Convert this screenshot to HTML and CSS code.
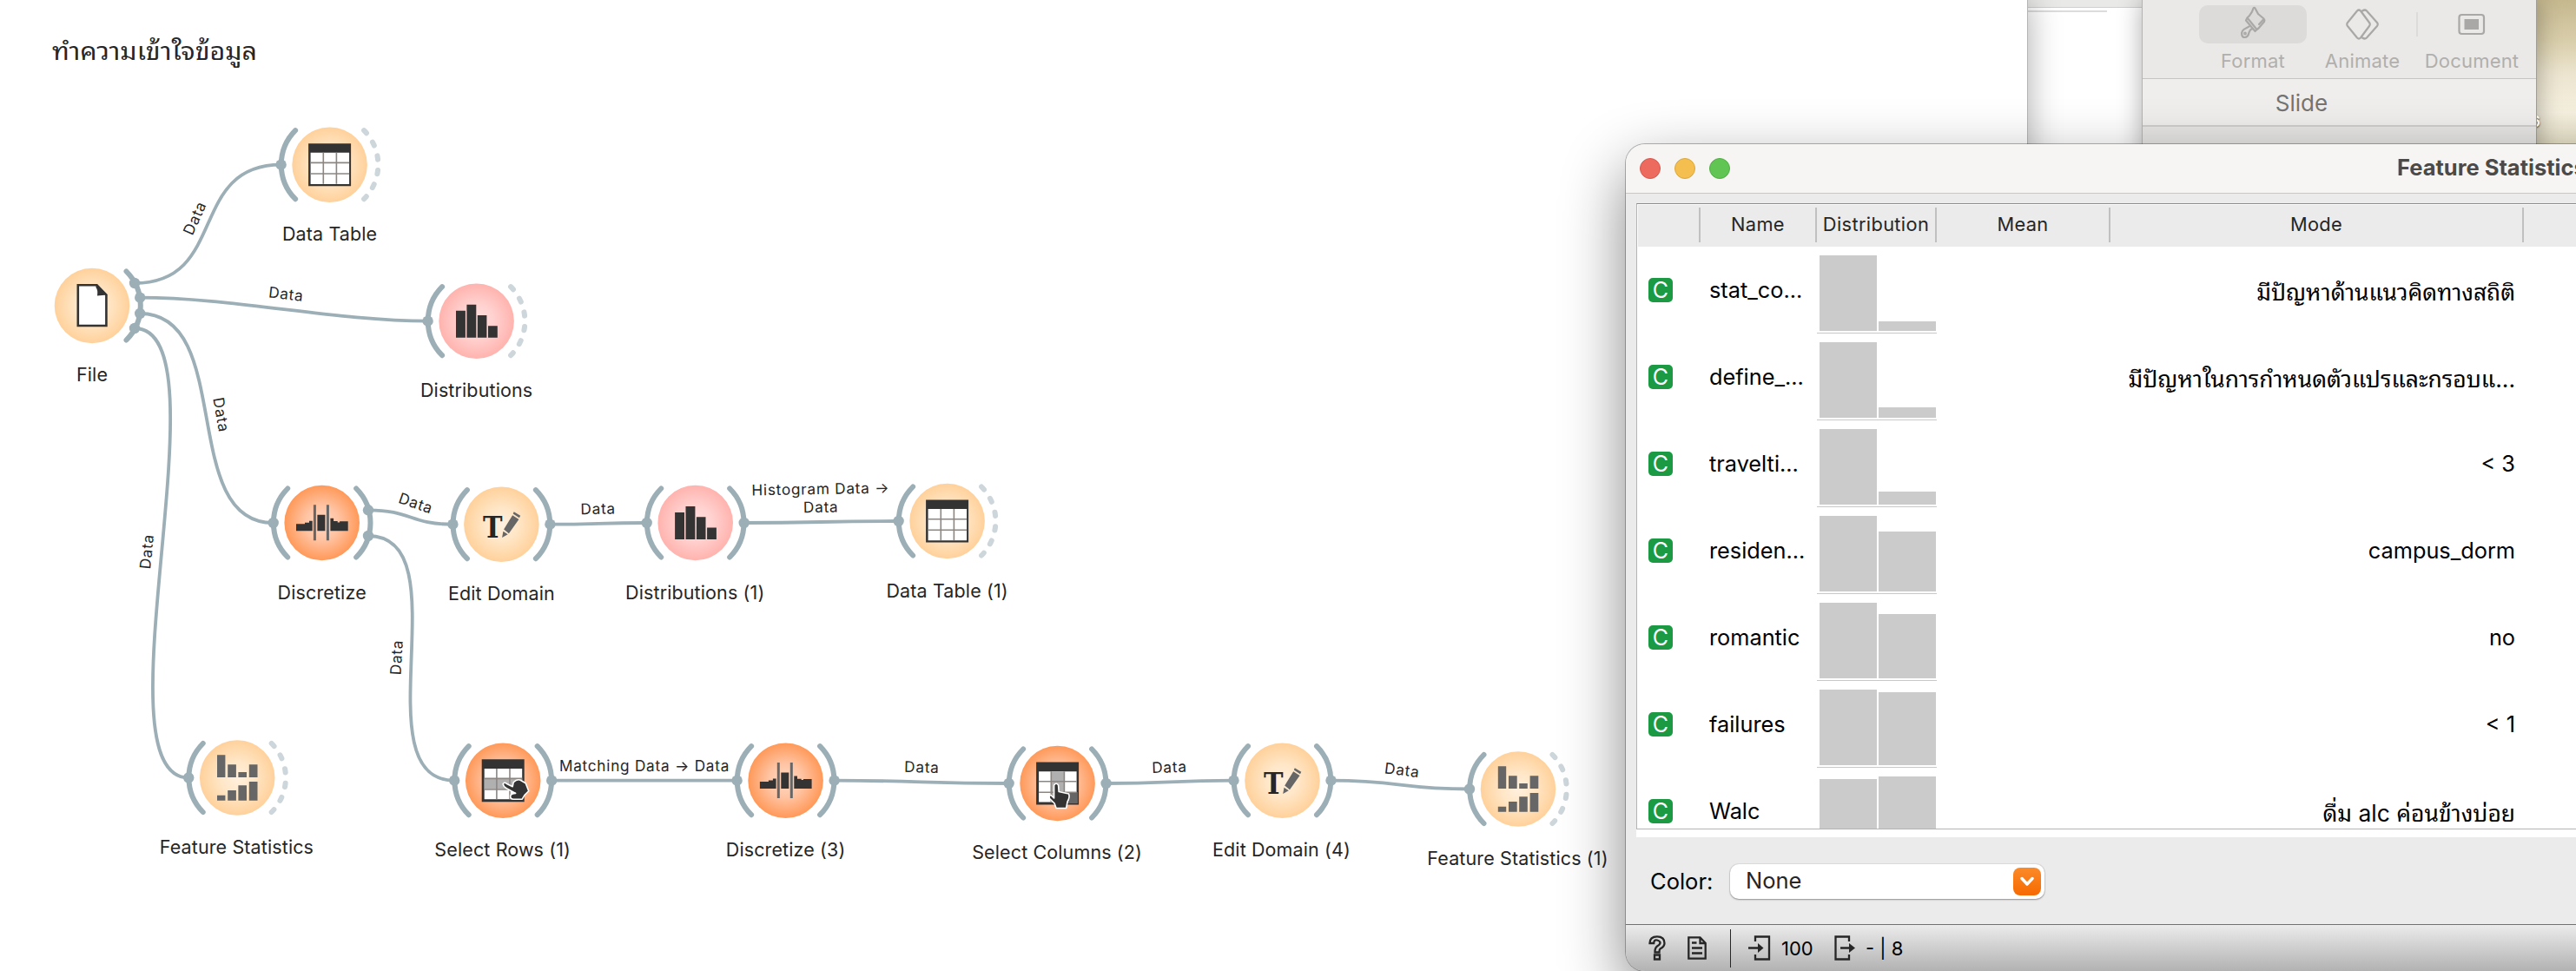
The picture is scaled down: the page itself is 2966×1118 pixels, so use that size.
FILE: index.html
```html
<!DOCTYPE html>
<html lang="th">
<head>
<meta charset="utf-8">
<title>Feature Statistics</title>
<link rel="stylesheet" href="styles.css">
</head>
<body>
<main class="desktop">

  <section class="window viewer">
    <div class="viewer-bar"></div>
    <div class="viewer-rule"></div>
  </section>

  <section class="window keynote">
    <div class="kn-toolbar">
      <div class="kn-tool kn-format">
        <div class="kn-button kn-active">
          <svg width="32" height="38" viewBox="0 0 32 38"><path d="M16.500 2.500Q17.500 1 18.500 2.500L22 9L28.500 14.500Q30 16 29 18L22.500 25.500L20.500 27L9.500 13.500L12 11Q15.500 7 16.500 2.500zM9.500 13.500L8 16.500L18.500 29L20.500 27M28.500 15L23 21M13 22.500C10.500 25 6 25.500 4 28.500C2 32 3.500 36 6.500 36C9.500 36 11 33 11.500 30.500C12 28 13 27 15.500 25.500"/><circle cx="7" cy="31.500" r=".8"/></svg>
        </div>
        <span>Format</span>
      </div>
      <div class="kn-tool kn-animate">
        <div class="kn-button">
          <svg width="42" height="38" viewBox="0 0 42 38"><path d="M15 3.500Q17 1.500 19 3.500L29 17Q30.500 19 29 21L19 34.500Q17 36.500 15 34.500L4 21Q2.500 19 4 17ZM21 3.500Q24 1.500 26 3.500L38 17Q39.500 19 38 21L26 34.500Q24 36.500 21 34.500"/></svg>
        </div>
        <span>Animate</span>
      </div>
      <div class="kn-separator"></div>
      <div class="kn-tool kn-document">
        <div class="kn-button">
          <svg width="32" height="26" viewBox="0 0 32 26"><rect x="1.500" y="2" width="28.500" height="22" rx="3"/><rect class="solid" x="7.500" y="7" width="16.500" height="12"/></svg>
        </div>
        <span>Document</span>
      </div>
    </div>
    <div class="kn-tab">Slide</div>
    <div class="kn-body"></div>
  </section>
  <span class="desktop-label">6</span>

  <section class="window canvas">
    <svg class="scheme" width="2334" height="1118" viewBox="0 0 2334 1118">
      <defs>
        <radialGradient id="yellow"><stop offset="0" stop-color="#fff0de"/><stop offset=".45" stop-color="#ffe6c6"/><stop offset="1" stop-color="#ffd19b"/></radialGradient>
        <radialGradient id="red"><stop offset="0" stop-color="#ffe0df"/><stop offset=".45" stop-color="#ffd2d0"/><stop offset="1" stop-color="#ffb3ae"/></radialGradient>
        <radialGradient id="orange"><stop offset="0" stop-color="#ffd9c4"/><stop offset=".45" stop-color="#ffc4a3"/><stop offset="1" stop-color="#ff9959"/></radialGradient>
        <path id="in" class="arc" d="M-39.500-39.500A56 56 0 0 0-39.500 39.500"/>
        <path id="out" class="arc" d="M39.500-39.500A56 56 0 0 1 39.500 39.500"/>
        <path id="idle" class="arc idle" d="M39.500-39.500A56 56 0 0 1 39.500 39.500"/>
        <circle id="dot" class="dot" r="6.200"/>
        <g id="i-table">
          <path fill="#333" d="M-24.500-24.500h49v49h-49z"/>
          <path fill="#fff" d="M-22-14h44.500v36.200h-44.500z"/>
          <path stroke="#8c8682" stroke-width="1.600" fill="none" d="M-7.300-14v36M7.800-14v36M-22-2.300h44.500M-22 10.300h44.500"/>
        </g>
        <g id="i-file">
          <path fill="#fff" stroke="#333" stroke-width="2.600" d="M-16.200-23.700H5.500L16.400-12.500V23H-16.200z"/>
          <path fill="#333" d="M4.500-24.500L17.700-12.500L6-11.500Q7-18 4.500-21z"/>
        </g>
        <path id="i-bars" fill="#333" d="M-23.600-12h10.900v31h-10.900zM-11.200-19h10.900v38h-10.900zM1.200-6.700h10.600v25.700h-10.600zM13.400 5.600h10.800v13.400h-10.800z"/>
        <g id="i-disc">
          <path fill="#333" d="M-29.700 1.300h10v-1.600h5v-2h3.700v11.600h-18.700zM-5.300-9.300h9v18.600h-9zM9.700-5.300h3.700v3.300h4.600v1.400h2.400v-1.200h9.600v11.100h-20.300z"/>
          <path stroke="#666" stroke-width="3" d="M-8.300-20.700v41M6.700-20.700v41"/>
        </g>
        <g id="i-edit">
          <text class="glyph-t" x="-21.500" y="15.300" textLength="22.500" lengthAdjust="spacingAndGlyphs">T</text>
          <path fill="#666" d="M2.700 5.700L12.700-10.500L20-5.700L8.500 10.500zM2 8L7.300 11.500L.7 15.300zM14.300-14.500L21.800-10L20.500-7.500L13.300-12.300z"/>
        </g>
        <path id="i-stats" fill="#666" d="M-23.200-26.200h9.400v25.700h-9.400zM-11-15.200h9.700v14.700h-9.700zM1.200-6.500h9.600v6h-9.600zM13.600-15.200h9.700v14.700h-9.700zM-23.200 20.200h9.400v6h-9.400zM-11 14.500h9.700v11.700h-9.700zM1.200 8.800h9.600v17.400h-9.600zM13.600 4.500h9.700v21.700h-9.700z"/>
        <g id="i-rows">
          <path fill="#333" d="M-24.500-24.500h49v49h-49z"/>
          <path fill="#fff" d="M-21.500-13.700h43.500v35.200h-43.500z"/>
          <path fill="#b0b0b0" d="M-21.500-2h43.500v12h-43.500z"/>
          <path stroke="#8c8682" stroke-width="1.600" fill="none" d="M-7.300-13.700v35.200M7.800-13.700v35.200M-21.500-2.300h43.500M-21.500 10.300h43.500"/>
          <path class="hand" d="M0 3.800Q1.500 1.500 4 3.500L11 7L12 2Q16-2 20-.5L26 3L29.500 12L25 16.500L22 21.500H12Q8.500 21.500 8.500 18Q9 15 14.500 14.700L4 9Q0 6.500 0 3.800z"/>
        </g>
        <g id="i-cols">
          <path fill="#333" d="M-24.500-24.500h49v49h-49z"/>
          <path fill="#fff" d="M-21.500-13.700h43.500v35.200h-43.500z"/>
          <path fill="#b0b0b0" d="M-7.300-13.700h14.800v35.200h-14.800z"/>
          <path fill="#666" d="M7.800 10h15.500v13h-15.500z"/>
          <path stroke="#8c8682" stroke-width="1.600" fill="none" d="M-7.300-13.700v35.200M7.800-13.700v35.200M-21.500-2.300h43.500M-21.500 10.300h43.500"/>
          <path class="hand" d="M-4 2Q-1.500-1.500 1 2L1.500 9.500L13 12Q14.500 16 11.500 21L10 28.500H-1.500L-3.500 23L-9 17.500Q-10.500 13.500-7.500 13.500L-4 17z"/>
        </g>
      </defs>

      <text class="title" x="60" y="69" textLength="236" lengthAdjust="spacingAndGlyphs">ทำความเข้าใจข้อมูล</text>

      <g class="links">
        <path d="M155 326C263 326 215.700 189.700 323.700 189.700"/>
        <path d="M161.200 342.700C269 342.700 384.600 369.700 492.600 369.700"/>
        <path d="M161.200 361C271 361 204.600 602 314.600 602"/>
        <path d="M155 378C265 378 107 895.500 217.200 895.500"/>
        <path d="M424 587.300C473.400 587.300 472 603.700 521.400 603.700"/>
        <path d="M424 617C534 617 413.200 898.700 523.200 898.700"/>
        <path d="M633.400 603.700C689 603.700 689 602 744.700 602"/>
        <path d="M856.700 602C945 602 945 600 1034.600 600"/>
        <path d="M635.200 898.700H848.600"/>
        <path d="M960.600 898.700C1061 898.700 1061 902 1161.600 902"/>
        <path d="M1273.600 902C1347 902 1347 898.700 1420.500 898.700"/>
        <path d="M1532.500 898.700C1612.500 898.700 1612 908.500 1692 908.500"/>
      </g>

      <g class="link-labels">
        <text transform="translate(239.400 257.900) rotate(-66)" y="-10.500">Data</text>
        <text transform="translate(327.500 355.500) rotate(6.500)" y="-11">Data</text>
        <text transform="translate(237.900 480.500) rotate(80)" y="-11">Data</text>
        <text transform="translate(186 636.700) rotate(-84.500)" y="-11">Data</text>
        <text transform="translate(473.200 595.500) rotate(18.900)" y="-11">Data</text>
        <text transform="translate(473.600 757.900) rotate(-87)" y="-11">Data</text>
        <text transform="translate(689 602.900) rotate(-1)" y="-11">Data</text>
        <text transform="translate(945.500 601) rotate(-1)" y="-32">Histogram Data →</text>
        <text transform="translate(945.500 601) rotate(-1)" y="-11">Data</text>
        <text x="742" y="887.700">Matching Data → Data</text>
        <text transform="translate(1061 900.400) rotate(1.500)" y="-11">Data</text>
        <text transform="translate(1347 900.400) rotate(-2)" y="-11">Data</text>
        <text transform="translate(1612.300 903.600) rotate(7)" y="-11">Data</text>
      </g>

      <g class="node" transform="translate(106 352)"><circle r="43.300" fill="url(#yellow)"/><use href="#i-file"/><use href="#out"/><text y="87">File</text></g>
      <g class="node" transform="translate(379.600 189.700)"><circle r="43.300" fill="url(#yellow)"/><use href="#i-table"/><use href="#in"/><use href="#idle"/><use href="#dot" x="-56"/><text y="87">Data Table</text></g>
      <g class="node" transform="translate(548.600 369.700)"><circle r="43.300" fill="url(#red)"/><use href="#i-bars"/><use href="#in"/><use href="#idle"/><use href="#dot" x="-56"/><text y="87">Distributions</text></g>
      <g class="node" transform="translate(370.700 602)"><circle r="43.300" fill="url(#orange)"/><use href="#i-disc"/><use href="#in"/><use href="#out"/><use href="#dot" x="-56"/><text y="88">Discretize</text></g>
      <g class="node" transform="translate(577.400 603.700)"><circle r="43.300" fill="url(#yellow)"/><use href="#i-edit"/><use href="#in"/><use href="#out"/><use href="#dot" x="-56"/><use href="#dot" x="56"/><text y="87">Edit Domain</text></g>
      <g class="node" transform="translate(800.700 602)"><circle r="43.300" fill="url(#red)"/><use href="#i-bars"/><use href="#in"/><use href="#out"/><use href="#dot" x="-56"/><use href="#dot" x="56"/><text x="-.5" y="88">Distributions (1)</text></g>
      <g class="node" transform="translate(1090.600 600)"><circle r="43.300" fill="url(#yellow)"/><use href="#i-table"/><use href="#in"/><use href="#idle"/><use href="#dot" x="-56"/><text y="87.500">Data Table (1)</text></g>
      <g class="node" transform="translate(273.200 895.500)"><circle r="43.300" fill="url(#yellow)"/><use href="#i-stats"/><use href="#in"/><use href="#idle"/><use href="#dot" x="-56"/><text x="-.8" y="87.500">Feature Statistics</text></g>
      <g class="node" transform="translate(579.200 898.700)"><circle r="43.300" fill="url(#orange)"/><use href="#i-rows"/><use href="#in"/><use href="#out"/><use href="#dot" x="-56"/><use href="#dot" x="56"/><text x="-.5" y="87">Select Rows (1)</text></g>
      <g class="node" transform="translate(904.600 898.700)"><circle r="43.300" fill="url(#orange)"/><use href="#i-disc"/><use href="#in"/><use href="#out"/><use href="#dot" x="-56"/><use href="#dot" x="56"/><text y="87">Discretize (3)</text></g>
      <g class="node" transform="translate(1217.600 902)"><circle r="43.300" fill="url(#orange)"/><use href="#i-cols"/><use href="#in"/><use href="#out"/><use href="#dot" x="-56"/><use href="#dot" x="56"/><text x="-.5" y="87">Select Columns (2)</text></g>
      <g class="node" transform="translate(1476.500 898.700)"><circle r="43.300" fill="url(#yellow)"/><use href="#i-edit"/><use href="#in"/><use href="#out"/><use href="#dot" x="-56"/><use href="#dot" x="56"/><text x="-1" y="87">Edit Domain (4)</text></g>
      <g class="node" transform="translate(1748 908.500)"><circle r="43.300" fill="url(#yellow)"/><use href="#i-stats"/><use href="#in"/><use href="#idle"/><use href="#dot" x="-56"/><text x="-.5" y="87.500">Feature Statistics (1)</text></g>

      <use href="#dot" x="155" y="326"/><use href="#dot" x="161.200" y="342.700"/><use href="#dot" x="161.200" y="361"/><use href="#dot" x="155" y="378"/>
      <use href="#dot" x="424" y="587.300"/><use href="#dot" x="424" y="617"/>
    </svg>
  </section>

  <section class="window stats">
    <header class="titlebar">
      <i class="light close"></i><i class="light minimize"></i><i class="light zoom"></i>
      <h1>Feature Statistics (1)</h1>
    </header>
    <div class="table-wrap">
      <div class="table">
        <div class="row head"><span></span><span>Name</span><span>Distribution</span><span>Mean</span><span>Mode</span><span></span></div>
        <div class="row"><span class="kind"><b>C</b></span><span class="name">stat_co...</span><span class="dist"><i style="height:87px"></i><i style="height:11px"></i></span><span></span><span class="mode thai">มีปัญหาด้านแนวคิดทางสถิติ</span></div>
        <div class="row"><span class="kind"><b>C</b></span><span class="name">define_...</span><span class="dist"><i style="height:87px"></i><i style="height:12px"></i></span><span></span><span class="mode thai">มีปัญหาในการกำหนดตัวแปรและกรอบแ...</span></div>
        <div class="row"><span class="kind"><b>C</b></span><span class="name">travelti...</span><span class="dist"><i style="height:87px"></i><i style="height:15px"></i></span><span></span><span class="mode">&lt; 3</span></div>
        <div class="row"><span class="kind"><b>C</b></span><span class="name">residen...</span><span class="dist"><i style="height:87px"></i><i style="height:69px"></i></span><span></span><span class="mode">campus_dorm</span></div>
        <div class="row"><span class="kind"><b>C</b></span><span class="name">romantic</span><span class="dist"><i style="height:87px"></i><i style="height:74px"></i></span><span></span><span class="mode">no</span></div>
        <div class="row"><span class="kind"><b>C</b></span><span class="name">failures</span><span class="dist"><i style="height:87px"></i><i style="height:84px"></i></span><span></span><span class="mode">&lt; 1</span></div>
        <div class="row"><span class="kind"><b>C</b></span><span class="name">Walc</span><span class="dist"><i style="height:84px"></i><i style="height:87px"></i></span><span></span><span class="mode thai">ดื่ม alc ค่อนข้างบ่อย</span></div>
      </div>
    </div>
    <div class="controls">
      <label>Color:</label>
      <div class="select"><span>None</span><i class="chevron"><svg width="16" height="12" viewBox="0 0 16 12"><path d="M2 2.500L8 9L14 2.500"/></svg></i></div>
    </div>
    <footer class="status">
      <svg class="s-help" width="20" height="29" viewBox="0 0 20 29"><path d="M1.500 9Q1.500 1.300 10 1.300T18.500 9Q18.500 13 13.500 15.500Q12.500 16.200 12.500 19.500H7.500Q7.300 14.500 10 12.500Q13.500 10.500 13.500 8.500T10 5.500T6.200 9zM7 22.500h6v5h-6z"/></svg>
      <svg class="s-doc" width="22" height="27" viewBox="0 0 22 27"><path d="M1.300 1.300H14.500L20.700 8V25.700H1.300zM14.500 1.300V8H20.700M5 7.500H10.500M5 13.500H17M5 19.500H17"/></svg>
      <i class="bar"></i>
      <svg class="s-in" width="26" height="29" viewBox="0 0 26 29"><path d="M8 7V1.500H24V27.500H8V22M0 14.500H15"/><path class="tip" d="M11 9L17.500 14.500L11 20z"/></svg>
      <span class="in-count">100</span>
      <svg class="s-out" width="26" height="29" viewBox="0 0 26 29"><path d="M17 7V1.500H1.500V27.500H17V22M7 14.500H20"/><path class="tip" d="M17 9L24 14.500L17 20z"/></svg>
      <span class="out-count">- | 8</span>
    </footer>
  </section>
</main>
</body>
</html>
```
FILE: styles.css
```css
* { box-sizing: border-box; }

body {
  margin: 0;
  font-family: Inter, Thonburi, "Noto Sans Thai Looped", Loma, Waree, Garuda, "Noto Sans Thai", "Noto Sans", sans-serif;
  color: #262626;
}

.desktop {
  position: relative;
  width: 2966px;
  height: 1118px;
  overflow: hidden;
  background: linear-gradient(#c5b88f 0, #d8cda9 45px, #ece4cf 85px, #f5f0df 130px, #e6e0c6 166px);
}

.window { position: absolute; }

/* Empty document window in the background */
.viewer {
  left: 2334px;
  top: 0;
  width: 132px;
  height: 600px;
  background: #fff;
}
.viewer-bar { height: 9px; background: #e9e9e8; border-bottom: 1px solid #cfcfcf; }
.viewer-rule { width: 92px; height: 2px; margin-top: 3px; background: #dcdcdc; }

/* Presentation app */
.keynote {
  left: 2466px;
  top: 0;
  width: 455px;
  height: 600px;
  background: #e6e5e3;
  border-left: 1px solid #b5b4b2;
  border-right: 1px solid #a09d94;
  box-shadow: 0 0 26px rgba(0, 0, 0, .32);
  color: #b0afad;
}
.kn-toolbar {
  display: flex;
  height: 91px;
  padding: 6px 0 0 65px;
  background: #eae9e7;
  border-bottom: 1px solid #c5c4c2;
}
.kn-tool {
  display: flex;
  flex-direction: column;
  align-items: center;
  width: 124px;
  font-size: 22px;
  line-height: 28px;
  letter-spacing: .2px;
}
.kn-tool span { margin-top: 6px; }
.kn-button {
  display: flex;
  align-items: center;
  justify-content: center;
  width: 124px;
  height: 44px;
  border-radius: 10px;
}
.kn-active { background: #dcdbd9; }
.kn-active svg { margin-top: -4px; }
.kn-button svg { fill: none; stroke: #a9a8a6; stroke-width: 2.2; stroke-linejoin: round; stroke-linecap: round; }
.kn-button .solid { fill: #a9a8a6; stroke: none; }
.kn-animate { margin-left: 2px; }
.kn-separator { width: 2px; height: 28px; margin-top: 8px; background: #dcdbd9; }
.kn-tab {
  height: 55px;
  padding-right: 87px;
  background: #efeeec;
  border-bottom: 2px solid #cfcecc;
  color: #757473;
  font-size: 26px;
  line-height: 55px;
  text-align: center;
}

.desktop-label {
  position: absolute;
  left: 2914px;
  top: 130px;
  width: 12px;
  color: #fff;
  font-size: 17px;
  font-weight: 600;
  text-shadow: 0 1px 2px rgba(0, 0, 0, .8);
  clip-path: inset(0 -4px 0 7px);
}

/* Workflow canvas */
.canvas {
  left: 0;
  top: 0;
  width: 2335px;
  height: 1118px;
  background: #fff;
  border-right: 1px solid #b4b4b4;
  box-shadow: 0 0 36px rgba(0, 0, 0, .33);
}
.scheme { display: block; }
.scheme text { fill: #262626; }
.title { font-size: 27.5px; }
.arc { fill: none; stroke: #9caeb6; stroke-width: 6; stroke-linecap: round; }
.idle { stroke: #cdd6da; stroke-dasharray: 4.3 12.4; }
.dot { fill: #9caeb6; }
.links path { fill: none; stroke: #9caeb6; stroke-width: 3.8; }
.link-labels text { font-size: 17.2px; letter-spacing: .75px; text-anchor: middle; }
.node text { font-size: 21.5px; letter-spacing: .12px; text-anchor: middle; }
.node .glyph-t, .glyph-t { font: 700 33px "DejaVu Serif", serif; fill: #333; letter-spacing: 0; text-anchor: start; }
.hand { fill: #333; stroke: #fff; stroke-width: 1.6; stroke-linejoin: round; }

/* Feature statistics window */
.stats {
  left: 1872px;
  top: 166px;
  width: 1500px;
  height: 952px;
  display: flex;
  flex-direction: column;
  background: #ebebeb;
  border-radius: 22px;
  box-shadow: 0 0 0 1px rgba(0, 0, 0, .28), 0 28px 72px 0 rgba(0, 0, 0, .48);
}
.titlebar {
  display: flex;
  align-items: center;
  flex: none;
  gap: 16px;
  height: 57px;
  padding-left: 16px;
  background: #f6f5f3;
  border-bottom: 1px solid #c9c8c7;
  border-radius: 22px 22px 0 0;
}
.light { width: 24px; height: 24px; border-radius: 50%; border: 1px solid; }
.close { background: #ec6a5e; border-color: #d9564b; }
.minimize { background: #f5bf4f; border-color: #dba63a; }
.zoom { background: #61c554; border-color: #4fae42; }
.titlebar h1 {
  margin: -3px 0 0 752px;
  color: #4b4a49;
  font-size: 25.5px;
  font-weight: 700;
  white-space: nowrap;
}
.table-wrap {
  flex: none;
  height: 730px;
  margin: 11px 0 0 12px;
  background: #fff;
}
.table {
  height: 721px;
  overflow: hidden;
  border: 1px solid #b4b4b4;
  border-top-color: #8c8c8c;
  padding: 1px 0 0 1px;
}
.row {
  display: grid;
  grid-template-columns: 72px 134px 138px 200px 476px 1fr;
  height: 100px;
}
.head {
  height: 48px;
  padding: 3px 0 5px;
  background: #ebebeb;
  font-size: 21.8px;
  letter-spacing: .35px;
  line-height: 38px;
  text-align: center;
}
.head span { border-right: 2px solid #c0c0c0; }
.row:not(.head) { color: #000; font-size: 25.3px; line-height: 99px; }
.kind { padding: 36px 0 0 12px; }
.kind b {
  display: block;
  width: 28px;
  height: 28px;
  border-radius: 5px;
  background: #1c9943;
  color: #fff;
  font-size: 25px;
  font-weight: 400;
  line-height: 28px;
  text-align: center;
}
.name { padding-left: 10px; }
.dist {
  display: flex;
  align-items: flex-end;
  gap: 2px;
  height: 100px;
  padding: 0 0 2px 3px;
  border-bottom: 1px solid #c8c8c8;
}
.dist i { width: 66px; background: #cbcbcb; }
.mode { padding-right: 10px; text-align: right; white-space: nowrap; }
.thai { padding-top: 3px; font-size: 26.4px; }
.controls {
  display: flex;
  align-items: flex-start;
  flex: none;
  height: 100px;
  padding-left: 28px;
}
.controls label { width: 92px; color: #000; font-size: 25.5px; line-height: 32px; margin-top: 35px; }
.select {
  display: flex;
  justify-content: space-between;
  width: 362px;
  height: 40px;
  margin-top: 31px;
  padding: 4px 4px 4px 18px;
  border-radius: 10px;
  background: #fff;
  box-shadow: 0 1px 2px rgba(0, 0, 0, .35), 0 0 0 1px rgba(0, 0, 0, .06);
  font-size: 25.5px;
  line-height: 29px;
}
.chevron {
  display: flex;
  align-items: center;
  justify-content: center;
  width: 32px;
  height: 32px;
  border-radius: 8px;
  background: linear-gradient(#fb8a28, #f66a00);
}
.chevron path { fill: none; stroke: #fff; stroke-width: 3.4; stroke-linecap: round; stroke-linejoin: round; }
.status {
  display: flex;
  align-items: center;
  flex: 1;
  padding: 0 0 0 26px;
  border-top: 1px solid #707070;
  border-radius: 0 0 22px 22px;
  background: linear-gradient(#ebebeb, #b2b2b2);
  color: #000;
  font-size: 22px;
}
.status svg { flex: none; fill: none; stroke: #262626; stroke-width: 2.3; }
.status .tip { fill: #262626; stroke: none; }
.s-doc { margin-left: 25px; }
.bar { width: 1px; height: 44px; margin: 0 20px 0 27px; background: #262626; }
.in-count { width: 73px; padding-left: 12px; }
.out-count { padding-left: 10px; white-space: pre; }
```
